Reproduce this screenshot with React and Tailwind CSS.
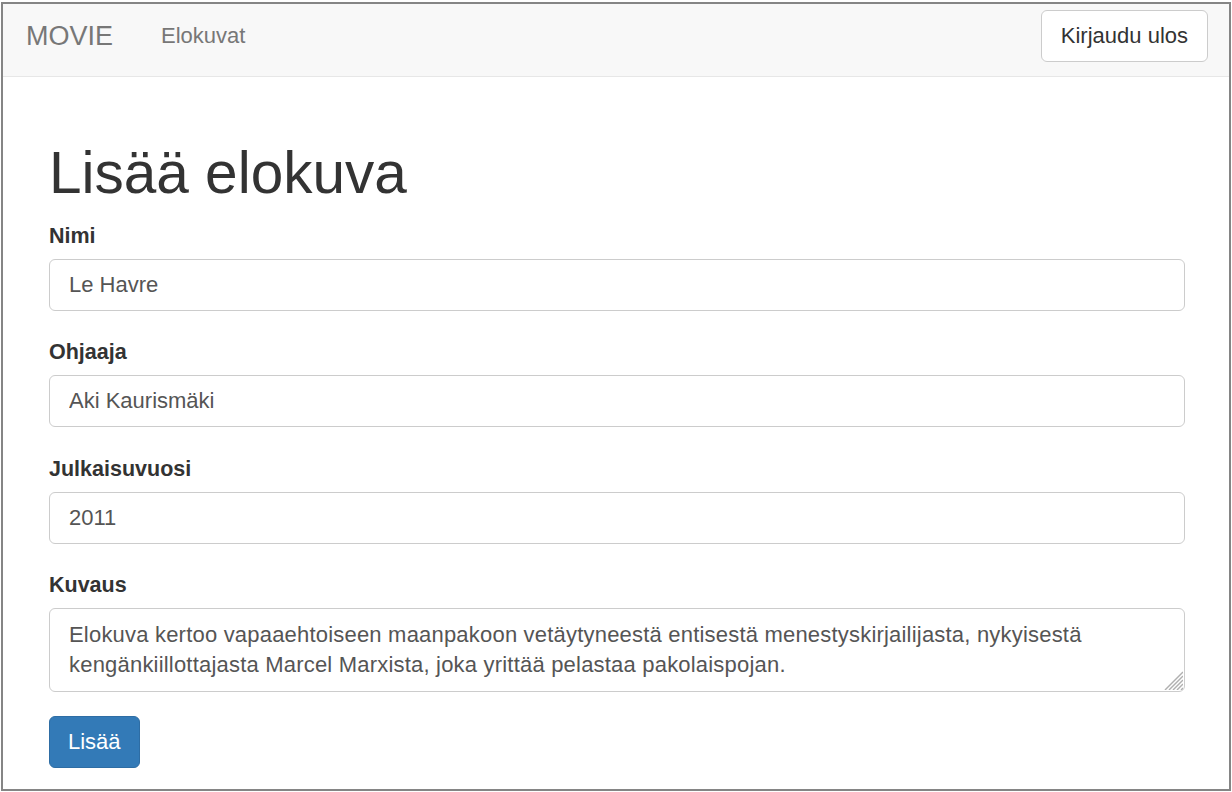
import React from 'react';

const font = { fontFamily: '"Liberation Sans", Arial, sans-serif' };

const Field = ({ label, value }) => (
  <div className='mb-[26.3px]'>
    <label className='block mb-[8px] text-[21.5px] leading-[30px] font-bold text-[#333]'>{label}</label>
    <input
      readOnly
      value={value}
      className='block w-full h-[52px] px-[19px] border border-[#ccc] rounded-[6px] bg-white text-[22px] leading-[30px] text-[#555] outline-none'
    />
  </div>
);

const App = () => {
  return (
    <div style={font} className='w-[1232px] h-[792px] bg-white pt-[2px] px-[1px] pb-[1px]'>
      <div className='h-full border-2 border-[#858585] flex flex-col overflow-hidden'>
        <nav className='h-[73px] shrink-0 flex items-center pb-[8px] bg-[#f8f8f8] border-b border-[#e7e7e7]'>
          <div className='pl-[23px] text-[27px] leading-[30px] text-[#777]'>MOVIE</div>
          <div className='ml-[48px] text-[22px] leading-[30px] text-[#777]'>Elokuvat</div>
          <button className='ml-auto mr-[21px] h-[52px] px-[19px] border border-[#ccc] rounded-[6px] bg-white text-[22px] leading-[30px] text-[#333]'>
            Kirjaudu ulos
          </button>
        </nav>

        <main className='pt-[64px] pl-[46px] pr-[44px]'>
          <h1 className='text-[58.5px] leading-[64px] font-normal text-[#333] mb-[16px]'>Lisää elokuva</h1>
          <Field label='Nimi' value='Le Havre' />
          <Field label='Ohjaaja' value='Aki Kaurismäki' />
          <Field label='Julkaisuvuosi' value='2011' />
          <div className='mb-[24px]'>
            <label className='block mb-[8px] text-[21.5px] leading-[30px] font-bold text-[#333]'>Kuvaus</label>
            <div className='relative h-[84px] px-[19px] py-[11px] border border-[#ccc] rounded-[6px] bg-white text-[22px] leading-[30px] tracking-[0.2px] text-[#555]'>
              Elokuva kertoo vapaaehtoiseen maanpakoon vetäytyneestä entisestä menestyskirjailijasta, nykyisestä
              <br />
              kengänkiillottajasta Marcel Marxista, joka yrittää pelastaa pakolaispojan.
              <svg className='absolute right-[1px] bottom-[1px]' width='22' height='22' viewBox='0 0 22 22'>
                <g stroke='#b0b0b0' strokeWidth='1.4'>
                  <line x1='4' y1='22' x2='22' y2='4' />
                  <line x1='8' y1='22' x2='22' y2='8' />
                  <line x1='12' y1='22' x2='22' y2='12' />
                  <line x1='16' y1='22' x2='22' y2='16' />
                  <line x1='20' y1='22' x2='22' y2='20' />
                </g>
              </svg>
            </div>
          </div>
          <button className='h-[52px] px-[18px] border border-[#2e6da4] rounded-[6px] bg-[#337ab7] text-[22px] leading-[30px] text-white'>
            Lisää
          </button>
        </main>
      </div>
    </div>
  );
};

export default App;
